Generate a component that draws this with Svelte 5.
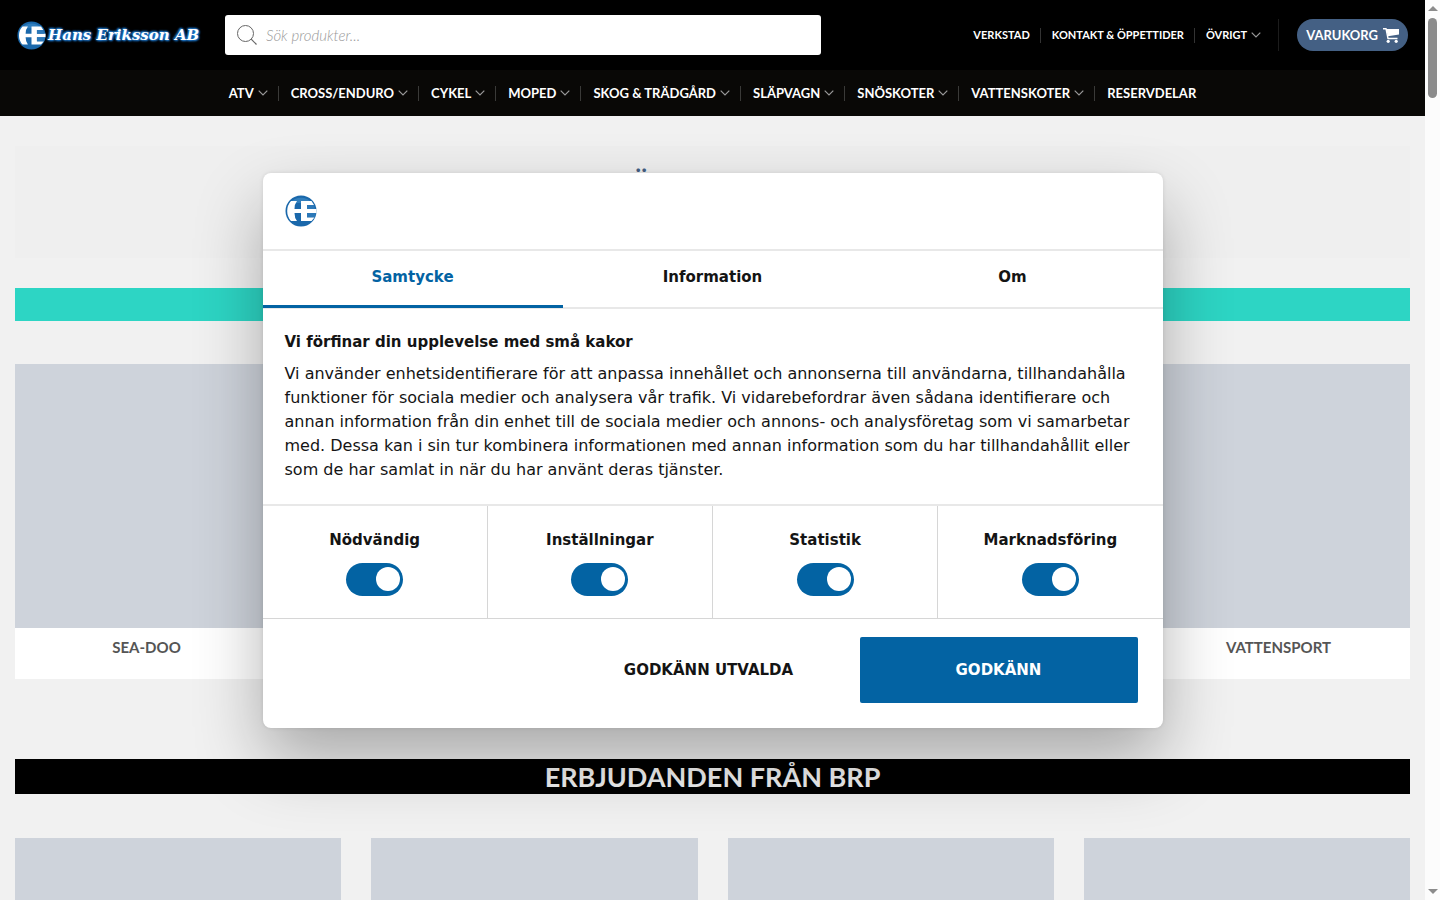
<script>
  let tab = $state("Samtycke");
  let search = $state("");
  let consents = $state([
    { id: "necessary", label: "Nödvändig", checked: true },
    { id: "preferences", label: "Inställningar", checked: true },
    { id: "statistics", label: "Statistik", checked: true },
    { id: "marketing", label: "Marknadsföring", checked: true },
  ]);

  const tabs = ["Samtycke", "Information", "Om"];
  const topLinks = [
    { title: "VERKSTAD" },
    { title: "KONTAKT & ÖPPETTIDER" },
    { title: "ÖVRIGT", menu: true },
  ];
  const mainLinks = [
    { title: "ATV", menu: true },
    { title: "CROSS/ENDURO", menu: true },
    { title: "CYKEL", menu: true },
    { title: "MOPED", menu: true },
    { title: "SKOG & TRÄDGÅRD", menu: true },
    { title: "SLÄPVAGN", menu: true },
    { title: "SNÖSKOTER", menu: true },
    { title: "VATTENSKOTER", menu: true },
    { title: "RESERVDELAR" },
  ];
  const categories = ["SEA-DOO", "", "", "", "VATTENSPORT"];
</script>

{#snippet emblem()}
  <svg class="emblem" viewBox="0 0 32 32" aria-hidden="true">
    <circle cx="16" cy="16" r="15.5" fill="#1a68ab" />
    <path d="M5 8a14 14 0 0 1 22 0z" fill="#4a96d0" opacity="0.5" />
    <path
      d="M6 6h6q-2.500 3-2.500 8H16V6h10.500l2.500 4h-7v4h9.500v4H22v4.500h7.500L26.500 26H16v-8H9.500q0 5 2.500 8H6A15 15 0 0 1 6 6z"
      fill="#fff"
    />
    <path d="M22 10h7l1 4h-8zM22 18h9l-1 4h-8z" fill="#2c78b8" />
  </svg>
{/snippet}

{#snippet chevron()}
  <svg class="chevron" viewBox="0 0 10 6" aria-hidden="true">
    <path d="M0.700 0.700 5 5 9.300 0.700" fill="none" stroke="currentColor" stroke-width="1.200" />
  </svg>
{/snippet}

<div class="window">
  <div class="page">
    <header>
      <div class="top-bar">
        <a href="#home" class="logo">
          {@render emblem()}
          <span class="logo__text">Hans Eriksson AB</span>
        </a>
        <form class="search" role="search">
          <svg class="search__icon" viewBox="0 0 20 20" aria-hidden="true">
            <circle cx="8.500" cy="8.500" r="8" fill="none" stroke="#666" />
            <path d="M14.200 14.200 19.500 19.500" stroke="#666" stroke-width="1.200" />
          </svg>
          <input type="search" aria-label="Sök produkter" placeholder="Sök produkter..." bind:value={search} />
        </form>
        <nav class="nav nav--small" aria-label="Information">
          {#each topLinks as link}
            <a href="#top">{link.title}{#if link.menu}{@render chevron()}{/if}</a>
          {/each}
        </nav>
        <div class="cart-wrap">
          <a href="#cart" class="cart">
            VARUKORG
            <svg class="cart__icon" viewBox="0 0 16 15" fill="#fff" aria-hidden="true">
              <path d="M3 1h13v5.500L5 8.200z" />
              <path d="M0 .7h3l2 9.800h9.500" fill="none" stroke="#fff" stroke-width="1.400" />
              <circle cx="5.200" cy="13.300" r="1.600" />
              <circle cx="13.200" cy="13.300" r="1.600" />
            </svg>
          </a>
        </div>
      </div>
      <nav class="nav main-nav" aria-label="Kategorier">
        {#each mainLinks as link}
          <a href="#category">{link.title}{#if link.menu}{@render chevron()}{/if}</a>
        {/each}
      </nav>
    </header>

    <main>
      <section class="notice"><h2>ÖPPETTIDER</h2></section>
      <div class="stripe"></div>
      <section class="categories">
        {#each categories as category}
          <a href="#category" class="category">
            <div class="category__image"></div>
            <div class="category__title">{category}</div>
          </a>
        {/each}
      </section>
      <h2 class="offers-title">ERBJUDANDEN FRÅN BRP</h2>
      <section class="offers">
        {#each [1, 2, 3, 4] as offer (offer)}
          <div class="offer"></div>
        {/each}
      </section>
    </main>

    <div class="overlay">
      <div class="dialog" role="dialog" aria-labelledby="consent-title">
        <div class="dialog__header">{@render emblem()}</div>
        <div class="tabs" role="tablist">
          {#each tabs as name}
            <button
              role="tab"
              class="tab"
              class:tab--active={tab === name}
              aria-selected={tab === name}
              onclick={() => (tab = name)}>{name}</button
            >
          {/each}
        </div>
        <div class="dialog__body">
          <h2 id="consent-title">Vi förfinar din upplevelse med små kakor</h2>
          <p>
            Vi använder enhetsidentifierare för att anpassa innehållet och annonserna till användarna, tillhandahålla
            funktioner för sociala medier och analysera vår trafik. Vi vidarebefordrar även sådana identifierare och
            annan information från din enhet till de sociala medier och annons- och analysföretag som vi samarbetar
            med. Dessa kan i sin tur kombinera informationen med annan information som du har tillhandahållit eller
            som de har samlat in när du har använt deras tjänster.
          </p>
        </div>
        <div class="consents">
          {#each consents as consent (consent.id)}
            <div class="consent">
              <label for={consent.id}>{consent.label}</label>
              <input type="checkbox" id={consent.id} class="switch" bind:checked={consent.checked} />
            </div>
          {/each}
        </div>
        <div class="dialog__footer">
          <button class="button">GODKÄNN UTVALDA</button>
          <button class="button button--primary">GODKÄNN</button>
        </div>
      </div>
    </div>
  </div>

  <div class="scrollbar" aria-hidden="true">
    <span class="scrollbar__up"></span>
    <span class="scrollbar__thumb"></span>
    <span class="scrollbar__down"></span>
  </div>
</div>

<style>
  .window {
    display: flex;
    height: 100vh;
    overflow: hidden;
    background: #f1f1f1;
    font-family: Lato, "Liberation Sans", sans-serif;
  }

  .window * {
    box-sizing: border-box;
  }

  a {
    color: inherit;
    text-decoration: none;
  }

  h2,
  p {
    margin: 0;
  }

  .page {
    position: relative;
    flex: 1;
    min-width: 0;
    overflow: hidden;
  }

  /* header */
  .top-bar {
    display: flex;
    align-items: center;
    height: 70px;
    padding: 0 17px;
    background: #000;
    color: #fff;
  }

  .logo {
    display: flex;
    align-items: center;
    gap: 2px;
    width: 208px;
  }

  .logo .emblem {
    width: 29px;
    height: 29px;
  }

  .logo__text {
    font: italic bold 15px/20px "DejaVu Serif", "Liberation Serif", serif;
    white-space: nowrap;
    text-shadow: 0 0 2px #1f7ad0, 0 0 3px #1f7ad0, 1px 1px 2px #1f7ad0, -1px -1px 2px #1f7ad0;
  }

  .search {
    display: flex;
    align-items: center;
    gap: 9px;
    width: 596px;
    height: 40px;
    padding: 0 12px;
    background: #fff;
    border-radius: 3px;
  }

  .search__icon {
    width: 20px;
    height: 20px;
    flex: none;
  }

  .search input {
    flex: 1;
    min-width: 0;
    padding: 0;
    border: 0;
    outline: 0;
    background: none;
    font: 15px/20px Lato, sans-serif;
    color: #444;
  }

  .search input::placeholder {
    font-style: italic;
    font-weight: 300;
    color: #999;
  }

  .nav {
    display: flex;
    align-items: center;
    color: #fff;
    font-weight: 700;
  }

  .nav a {
    display: flex;
    align-items: center;
    white-space: nowrap;
  }

  .nav a + a::before {
    content: "";
    width: 1px;
    height: 15px;
    margin: 0 12px 0 10px;
    background: #3a3a38;
  }

  .nav--small {
    margin-left: auto;
    font-size: 11px;
    line-height: 12px;
  }

  .nav--small a + a::before {
    margin: 0 11px 0 10px;
    background: #333;
  }

  .main-nav {
    justify-content: center;
    height: 46px;
    background: #090806;
    font-size: 13px;
  }

  .chevron {
    width: 10px;
    height: 6px;
    margin-left: 4px;
    color: #999;
  }

  .cart-wrap {
    margin-left: 17px;
    padding-left: 18px;
    border-left: 1px solid #1c1c1c;
  }

  .cart {
    display: flex;
    align-items: center;
    gap: 5px;
    height: 32px;
    padding: 0 9px;
    border-radius: 16px;
    background: #446084;
    font-size: 13px;
    font-weight: 700;
  }

  .cart__icon {
    width: 16px;
    height: 15px;
  }

  /* page content */
  main {
    padding: 30px 15px 0;
  }

  .notice {
    height: 112px;
    padding-top: 19px;
    background: #efefef;
    text-align: center;
  }

  .notice h2 {
    font-size: 27px;
    line-height: 36px;
    color: #446084;
  }

  .stripe {
    height: 33px;
    margin-top: 30px;
    background: #2dd5c4;
  }

  .categories {
    display: grid;
    grid-template-columns: repeat(5, 1fr);
    gap: 20px;
    margin-top: 43px;
  }

  .category {
    background: #fff;
  }

  .category__image {
    height: 264px;
    background: #ced3db;
  }

  .category__title {
    height: 51px;
    padding-top: 9px;
    font-size: 15px;
    font-weight: 700;
    line-height: 20px;
    text-align: center;
    color: #555;
  }

  .offers-title {
    margin-top: 80px;
    background: #000;
    color: #f1f1f1;
    font-size: 27px;
    line-height: 35px;
    text-align: center;
  }

  .offers {
    display: grid;
    grid-template-columns: repeat(4, 1fr);
    gap: 30px;
    margin-top: 44px;
  }

  .offer {
    height: 326px;
    background: #ced3db;
  }

  /* cookie dialog */
  .overlay {
    position: absolute;
    inset: 0;
    display: flex;
    align-items: center;
    justify-content: center;
  }

  .dialog {
    width: 900px;
    max-width: 100%;
    background: #fff;
    border-radius: 8px;
    box-shadow: 0 32px 68px rgba(0, 0, 0, 0.3), 0 0 4px rgba(0, 0, 0, 0.1);
    color: #141414;
    font: 15px/24px "DejaVu Sans", sans-serif;
    overflow: hidden;
  }

  .dialog__header {
    padding: 22px;
    border-bottom: 2px solid #e8e8e8;
  }

  .dialog__header .emblem {
    display: block;
    width: 32px;
    height: 32px;
  }

  .tabs {
    display: flex;
    border-bottom: 2px solid #e8e8e8;
  }

  .tab {
    flex: 1;
    height: 57px;
    margin-bottom: -1px;
    padding: 0 0 2px;
    border: 0;
    border-bottom: 3px solid transparent;
    background: none;
    color: inherit;
    font: bold 15px/24px "DejaVu Sans", sans-serif;
    cursor: pointer;
  }

  .tab--active {
    border-color: #0363a3;
    color: #0363a3;
  }

  .dialog__body {
    padding: 21px 22px 22px;
  }

  .dialog__body h2 {
    margin-bottom: 8px;
    font-size: 15px;
    line-height: 24px;
  }

  .dialog__body p {
    font-size: 16px;
  }

  .consents {
    display: flex;
    border-top: 2px solid #e8e8e8;
    border-bottom: 1px solid #d6d6d6;
  }

  .consent {
    flex: 1;
    display: flex;
    flex-direction: column;
    align-items: center;
    gap: 11px;
    padding: 22px 0;
    font-weight: bold;
  }

  .consent + .consent {
    border-left: 1px solid #d6d6d6;
  }

  .switch {
    appearance: none;
    width: 57px;
    height: 33px;
    margin: 0;
    padding: 4px 3px;
    border-radius: 17px;
    background: #d6d6d6;
    cursor: pointer;
  }

  .switch::before {
    content: "";
    display: block;
    width: 24px;
    height: 24px;
    border-radius: 50%;
    background: #fff;
  }

  .switch:checked {
    background: #0363a3;
  }

  .switch:checked::before {
    margin-left: auto;
  }

  .dialog__footer {
    display: flex;
    justify-content: flex-end;
    gap: 12px;
    padding: 18px 25px 25px;
  }

  .button {
    width: 278px;
    height: 66px;
    border: 0;
    border-radius: 2px;
    background: none;
    color: inherit;
    font: bold 15px/24px "DejaVu Sans", sans-serif;
    cursor: pointer;
  }

  .button--primary {
    background: #0363a3;
    color: #fff;
  }

  /* scrollbar */
  .scrollbar {
    display: flex;
    flex-direction: column;
    align-items: center;
    width: 15px;
    padding: 6px 0;
    background: #fcfcfc;
  }

  .scrollbar__up,
  .scrollbar__down {
    border: 5px solid transparent;
    border-top-width: 0;
    border-bottom-color: #8b8b8b;
  }

  .scrollbar__thumb {
    width: 9px;
    height: 80px;
    margin: 7px 0 auto;
    border-radius: 5px;
    background: #8b8b8b;
  }

  .scrollbar__down {
    border-top: 5px solid #8b8b8b;
    border-bottom-width: 0;
  }
</style>
